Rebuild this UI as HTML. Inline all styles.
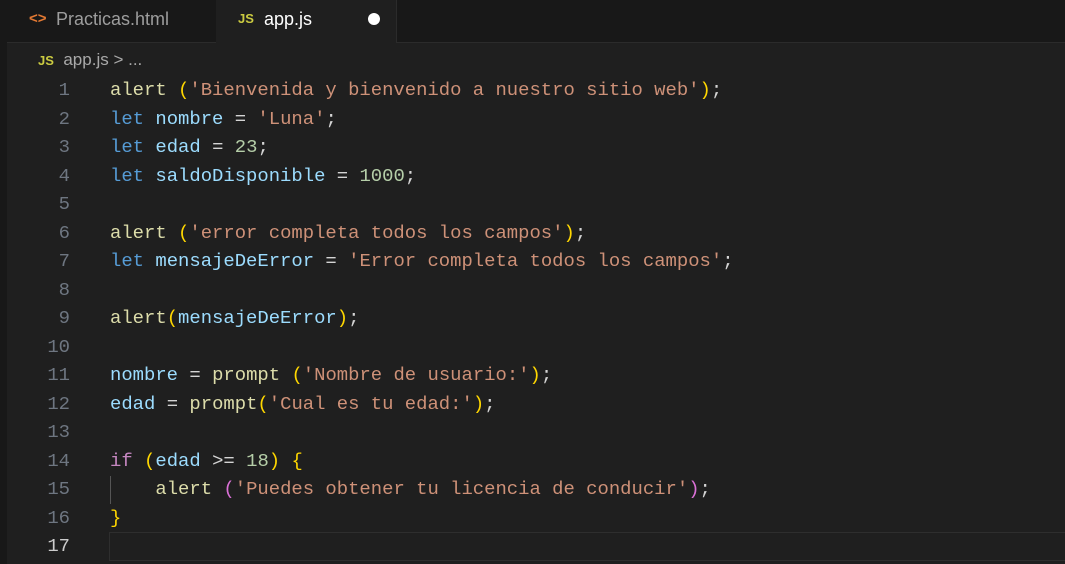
<!DOCTYPE html><html><head><style>
body{margin:0;width:1065px;height:564px;background:#1f1f1f;overflow:hidden;font-family:"Liberation Sans",sans-serif;position:relative}
.tabs{position:absolute;left:0;top:0;width:1065px;height:42px;background:#181818;border-bottom:1px solid #2b2b2b}
.strip{position:absolute;left:0;top:0;width:7px;height:564px;background:#181818}
.tab{position:absolute;top:0;height:42px;line-height:38px;font-size:18px}
.t1{left:7px;width:209px;color:#9d9d9d;background:#181818;border-right:1px solid #2b2b2b}
.t2{left:216px;width:180px;background:#1f1f1f;color:#fff;height:43px;border-right:1px solid #2b2b2b}
.js{color:#cbcb41;font-weight:bold;font-size:13px}
.bc{position:absolute;left:38px;top:50px;font-size:17px;color:#a9a9a9}
.code{position:absolute;left:0;top:76px;font-family:"Liberation Mono",monospace;font-size:18.9px}
.l{height:28.5px;line-height:28.5px;white-space:pre;position:relative}
.n{display:inline-block;width:70px;text-align:right;color:#6e7681;margin-right:40px}
.k{color:#569cd6}.v{color:#9cdcfe}.f{color:#dcdcaa}.s{color:#ce9178}.num{color:#b5cea8}.p{color:#ffd700}.p2{color:#da70d6}.c{color:#c586c0}.w{color:#d4d4d4}
.cur{position:absolute;left:109px;top:532px;width:960px;height:27px;border:1px solid #2e2e2e;border-right:none}
.guide{position:absolute;left:110px;top:476px;width:1px;height:28px;background:#555}
</style></head><body>
<div class="tabs"></div><div class="strip"></div>
<div class="tab t1"><span style="position:absolute;left:22px;color:#e37933;font-size:15px;font-weight:bold">&lt;&gt;</span><span style="position:absolute;left:49px">Practicas.html</span></div>
<div class="tab t2"><span class="js" style="position:absolute;left:22px">JS</span><span style="position:absolute;left:48px">app.js</span><span style="position:absolute;left:152px;top:13px;width:12px;height:12px;border-radius:50%;background:#fff"></span></div>
<div class="bc"><span class="js">JS</span>&nbsp; app.js &gt; ...</div>
<div class="cur"></div><div class="guide"></div>
<div class="code">
<div class="l"><span class="n">1</span><span class="f">alert</span> <span class="p">(</span><span class="s">'Bienvenida y bienvenido a nuestro sitio web'</span><span class="p">)</span><span class="w">;</span></div>
<div class="l"><span class="n">2</span><span class="k">let</span> <span class="v">nombre</span> <span class="w">=</span> <span class="s">'Luna'</span><span class="w">;</span></div>
<div class="l"><span class="n">3</span><span class="k">let</span> <span class="v">edad</span> <span class="w">=</span> <span class="num">23</span><span class="w">;</span></div>
<div class="l"><span class="n">4</span><span class="k">let</span> <span class="v">saldoDisponible</span> <span class="w">=</span> <span class="num">1000</span><span class="w">;</span></div>
<div class="l"><span class="n">5</span></div>
<div class="l"><span class="n">6</span><span class="f">alert</span> <span class="p">(</span><span class="s">'error completa todos los campos'</span><span class="p">)</span><span class="w">;</span></div>
<div class="l"><span class="n">7</span><span class="k">let</span> <span class="v">mensajeDeError</span> <span class="w">=</span> <span class="s">'Error completa todos los campos'</span><span class="w">;</span></div>
<div class="l"><span class="n">8</span></div>
<div class="l"><span class="n">9</span><span class="f">alert</span><span class="p">(</span><span class="v">mensajeDeError</span><span class="p">)</span><span class="w">;</span></div>
<div class="l"><span class="n">10</span></div>
<div class="l"><span class="n">11</span><span class="v">nombre</span> <span class="w">=</span> <span class="f">prompt</span> <span class="p">(</span><span class="s">'Nombre de usuario:'</span><span class="p">)</span><span class="w">;</span></div>
<div class="l"><span class="n">12</span><span class="v">edad</span> <span class="w">=</span> <span class="f">prompt</span><span class="p">(</span><span class="s">'Cual es tu edad:'</span><span class="p">)</span><span class="w">;</span></div>
<div class="l"><span class="n">13</span></div>
<div class="l"><span class="n">14</span><span class="c">if</span> <span class="p">(</span><span class="v">edad</span> <span class="w">&gt;=</span> <span class="num">18</span><span class="p">)</span> <span class="p">{</span></div>
<div class="l"><span class="n">15</span>    <span class="f">alert</span> <span class="p2">(</span><span class="s">'Puedes obtener tu licencia de conducir'</span><span class="p2">)</span><span class="w">;</span></div>
<div class="l"><span class="n">16</span><span class="p">}</span></div>
<div class="l"><span class="n" style="color:#ccc">17</span></div>
</div>
</body></html>
